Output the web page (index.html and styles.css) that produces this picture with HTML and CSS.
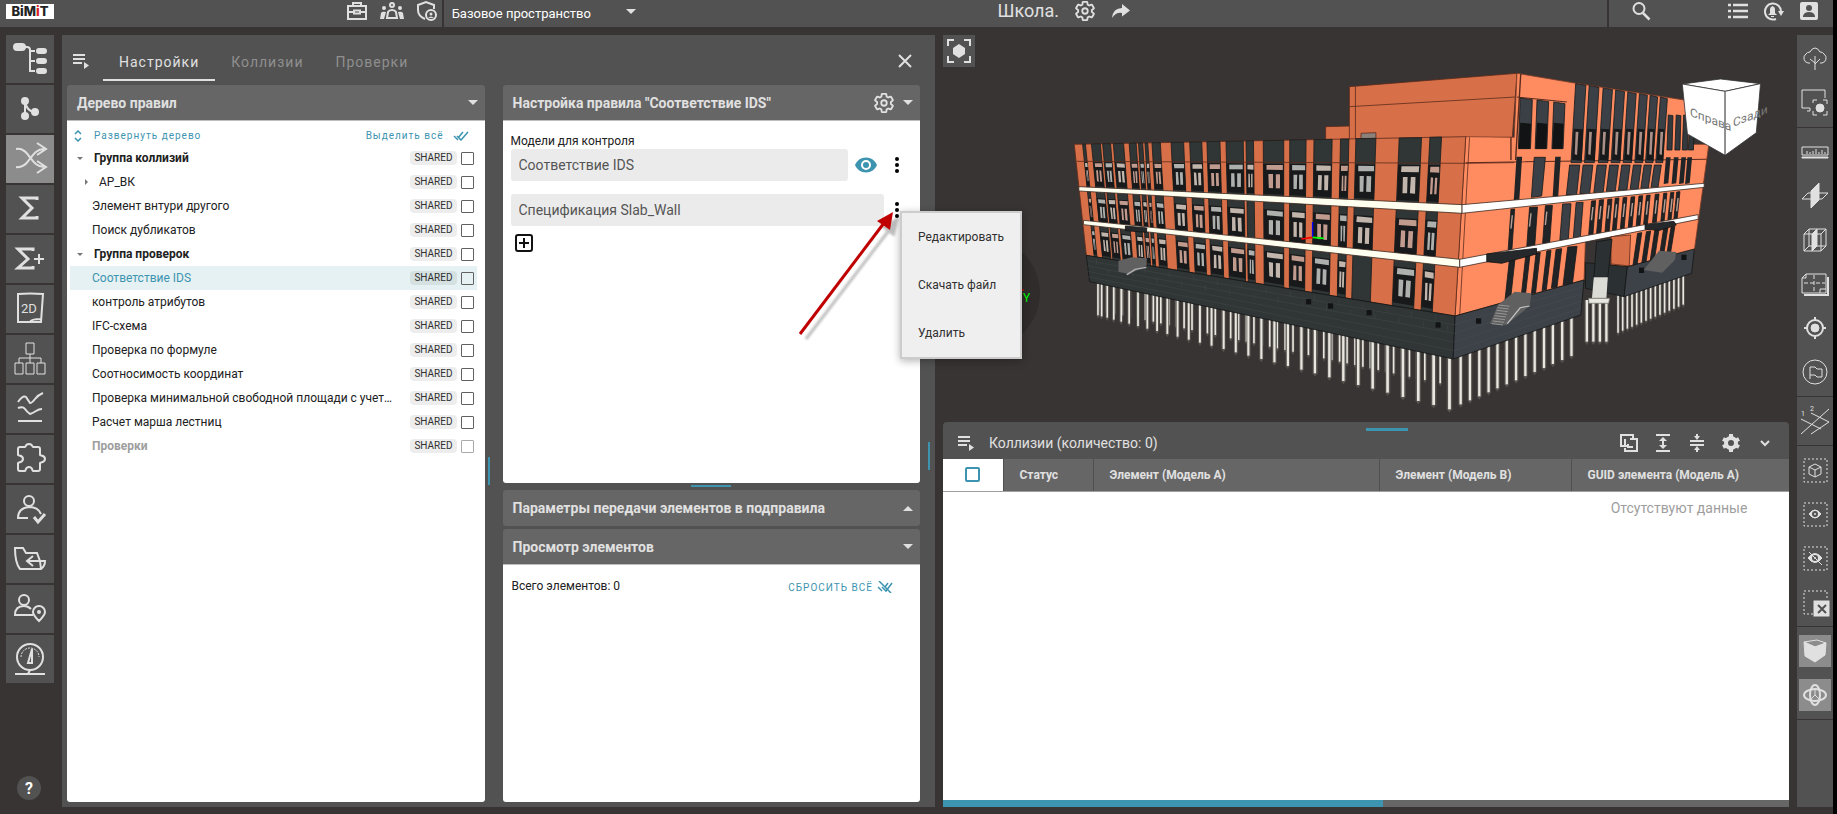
FILE: index.html
```html
<!DOCTYPE html>
<html lang="ru">
<head>
  <meta charset="UTF-8">
  <meta name="viewport" content="width=device-width, initial-scale=1.0">
  <title>BiMiT - Школа</title>
  <link rel="stylesheet" href="styles.css">
</head>
<body>
  <!-- Shared icons -->
  <svg class="sprite" aria-hidden="true">
    <symbol id="i-cog" viewBox="0 0 24 24"><path d="M19.43,12.97C19.47,12.65 19.5,12.33 19.5,12C19.5,11.67 19.47,11.34 19.43,11L21.54,9.37C21.73,9.22 21.78,8.95 21.66,8.73L19.66,5.27C19.54,5.05 19.27,4.96 19.05,5.05L16.56,6.05C16.04,5.66 15.5,5.32 14.87,5.07L14.5,2.42C14.46,2.18 14.25,2 14,2H10C9.75,2 9.54,2.18 9.5,2.42L9.13,5.07C8.5,5.32 7.96,5.66 7.44,6.05L4.95,5.05C4.73,4.96 4.46,5.05 4.34,5.27L2.34,8.73C2.21,8.95 2.27,9.22 2.46,9.37L4.57,11C4.53,11.34 4.5,11.67 4.5,12C4.5,12.33 4.53,12.65 4.57,12.97L2.46,14.63C2.27,14.78 2.21,15.05 2.34,15.27L4.34,18.73C4.46,18.95 4.73,19.03 4.95,18.95L7.44,17.94C7.96,18.34 8.5,18.68 9.13,18.93L9.5,21.58C9.54,21.82 9.75,22 10,22H14C14.25,22 14.46,21.82 14.5,21.58L14.87,18.93C15.5,18.67 16.04,18.34 16.56,17.94L19.05,18.95C19.27,19.03 19.54,18.95 19.66,18.73L21.66,15.27C21.78,15.05 21.73,14.78 21.54,14.63Z" fill="none" stroke="currentColor" stroke-width="2"/><circle cx="12" cy="12" r="3" fill="none" stroke="currentColor" stroke-width="2"/></symbol>
    <symbol id="i-list" viewBox="0 0 18 16"><path d="M1 2h12M1 6h12M1 10h9" stroke="currentColor" stroke-width="2"/><path d="M12 9l5 3.500-5 3.500z" fill="currentColor"/></symbol>
    <symbol id="i-down" viewBox="0 0 10 5"><path d="M0 0h10l-5 5z" fill="currentColor"/></symbol>
    <symbol id="i-up" viewBox="0 0 10 5"><path d="M0 5h10l-5-5z" fill="currentColor"/></symbol>
    <symbol id="i-eye" viewBox="0 0 24 24"><path fill="currentColor" d="M12,9A3,3 0 0,0 9,12A3,3 0 0,0 12,15A3,3 0 0,0 15,12A3,3 0 0,0 12,9M12,17A5,5 0 0,1 7,12A5,5 0 0,1 12,7A5,5 0 0,1 17,12A5,5 0 0,1 12,17M12,4.500C7,4.500 2.730,7.610 1,12C2.730,16.390 7,19.500 12,19.500C17,19.500 21.270,16.390 23,12C21.270,7.610 17,4.500 12,4.500Z"/></symbol>
    <symbol id="i-dots" viewBox="0 0 24 24"><circle cx="12" cy="6" r="2"/><circle cx="12" cy="12" r="2"/><circle cx="12" cy="18" r="2"/></symbol>
  </svg>

  <header class="topbar">
    <div class="top-left">
      <a class="logo" href="#">B<i>i</i>M<i class="red">i</i>T</a>
      <div class="top-icons">
        <button class="icon-btn" aria-label="Проекты"><svg width="22" height="20" viewBox="0 0 22 20"><path d="M2 5h18v13H2zM7 5V2h8v3M2 11h6m6 0h6M8 9.500h6v3H8z" fill="none" stroke="currentColor" stroke-width="2"/></svg></button>
        <button class="icon-btn" aria-label="Команда"><svg width="26" height="20" viewBox="0 0 26 20"><g fill="none" stroke="currentColor" stroke-width="2"><circle cx="13" cy="4" r="2"/><path d="M8 17l1-6q1-2 4-2t4 2l1 6z"/></g><g fill="currentColor"><circle cx="5" cy="7" r="2"/><circle cx="21" cy="7" r="2"/><path d="M1 18l1-6q1-2 5-1l-2 7zM25 18l-1-6q-1-2-5-1l2 7z"/></g></svg></button>
        <button class="icon-btn" aria-label="Права"><svg width="22" height="22" viewBox="0 0 22 22"><path d="M9 19Q2 16 2 10V5l8-3 8 3v4" fill="none" stroke="currentColor" stroke-width="2"/><circle cx="15" cy="15" r="5" fill="none" stroke="currentColor" stroke-width="2"/><circle cx="15" cy="14" r="1.500" fill="currentColor"/><path d="M12 18q3-3 6 0z" fill="currentColor"/></svg></button>
      </div>
    </div>
    <div class="top-space">
      <select class="space-select" aria-label="Пространство"><option>Базовое пространство</option></select>
      <svg class="space-caret" width="10" height="5"><use href="#i-down"/></svg>
    </div>
    <div class="top-title">
      <span class="project">Школа.</span>
      <button class="icon-btn" aria-label="Настройки проекта"><svg width="22" height="22"><use href="#i-cog"/></svg></button>
      <button class="icon-btn" aria-label="Поделиться"><svg width="20" height="18" viewBox="0 0 20 18"><path d="M11 2l8 6.500-8 6V11Q5 10 1 16 2 6 11 6z" fill="currentColor"/></svg></button>
    </div>
    <div class="top-right">
      <button class="icon-btn search-btn" aria-label="Поиск"><svg width="20" height="20" viewBox="0 0 20 20"><circle cx="8" cy="7.500" r="5.500" fill="none" stroke="currentColor" stroke-width="2"/><path d="M12 12l6.500 6.500" stroke="currentColor" stroke-width="2.500"/></svg></button>
      <button class="icon-btn" aria-label="Список"><svg width="20" height="18" viewBox="0 0 20 18"><path d="M5 3h15M5 9h15M5 15h15M0 3h3M0 9h3M0 15h3" stroke="currentColor" stroke-width="2.500"/></svg></button>
      <button class="icon-btn" aria-label="Уведомления"><svg width="22" height="20" viewBox="0 0 22 20"><path d="M13 18a8 8 0 1 1 5-7" fill="none" stroke="currentColor" stroke-width="2"/><path d="M15 10h6l-3 5zM5 14l2-2V8q0-2 2.500-3 2.500 1 2.500 3v4l2 2zM8 15h3v1H8z" fill="currentColor"/></svg></button>
      <button class="icon-btn" aria-label="Профиль"><svg width="18" height="18" viewBox="0 0 18 18"><rect width="18" height="18" rx="2" fill="currentColor"/><circle cx="9" cy="6" r="3" fill="#525252"/><path d="M3 15v-1q1-4 6-4t6 4v1z" fill="#525252"/></svg></button>
    </div>
  </header>

  <main class="workspace">
    <nav class="sidebar">
      <button class="side-btn" aria-label="Структура"><svg viewBox="0 0 48 48"><g fill="currentColor"><rect x="8" y="9" width="11" height="6" rx="3"/><rect x="31" y="14" width="9" height="4" rx="2"/><rect x="31" y="24" width="9" height="4" rx="2"/><rect x="31" y="34" width="9" height="4" rx="2"/></g><path d="M18 12h3q3 0 3 3v21h5M24 16h5M24 26h5"/></svg></button>
      <button class="side-btn" aria-label="Ветви"><svg viewBox="0 0 48 48"><g fill="currentColor"><circle cx="19" cy="16" r="3"/><circle cx="19" cy="31" r="3"/><circle cx="29" cy="27" r="3"/></g><path d="M19 16v15M19 17q2 9 9 10"/></svg></button>
      <button class="side-btn active" aria-label="Коллизии"><svg viewBox="0 0 48 48"><path d="M10 32c14 2 14-18 28-18M10 14c14-2 14 18 28 18M31 8l9 6-9 6M31 26l9 6-9 6"/></svg></button>
      <button class="side-btn" aria-label="Сумма"><svg viewBox="0 0 48 48"><path class="bold" d="M31 15v-2H16l10 10-10 10h15v-2"/></svg></button>
      <button class="side-btn" aria-label="Сумма плюс"><svg viewBox="0 0 48 48"><path class="bold" d="M27 16v-2H12l10 10-10 9h15v-2"/><path d="M33 19v10M28 24h10"/></svg></button>
      <button class="side-btn" aria-label="Чертежи"><svg viewBox="0 0 48 48"><path d="M12 9q12-1 25 0l-2 28H12zM24 37q1-3 11-3"/><text x="15" y="28">2D</text></svg></button>
      <button class="side-btn" aria-label="Иерархия"><svg viewBox="0 0 48 48"><path class="thin" d="M20 8h8v11h-8zM9 28h8v11H9zM20 28h8v11h-8zM31 28h8v11h-8zM24 19v9M13 28v-5h22v5"/></svg></button>
      <button class="side-btn" aria-label="Графики"><svg viewBox="0 0 48 48"><path d="M12 17q5-7 8-5l4 6q2 0 5-4t8-6M12 23q5-2 7 1t5 5q3-1 6-3t6-2M12 36h24"/></svg></button>
      <button class="side-btn" aria-label="Модули"><svg viewBox="0 0 48 48"><path d="M12 14q0-2 2-2h5c1 0 0-3 4-3s3 3 4 3h5q2 0 2 2v6c0 1 5 0 5 4s-5 3-5 4v6q0 2-2 2h-5c-1 0 0-4-4-4s-3 4-4 4h-5q-2 0-2-2v-6c0-1 5 0 5-4s-5-3-5-4z"/></svg></button>
      <button class="side-btn" aria-label="Согласование"><svg viewBox="0 0 48 48"><circle cx="23" cy="16" r="5"/><path d="M22 33H12q0-10 11-11 9 0 12 7"/><path class="bold" d="M28 32l4 5 7-8"/></svg></button>
      <button class="side-btn" aria-label="Импорт"><svg viewBox="0 0 48 48"><path d="M9 13h8l3 5h11l3 8h5q0 5-4 8H14Q9 28 9 13zM34 26l1 8M36 26H22M27 21l-6 5 6 5"/></svg></button>
      <button class="side-btn" aria-label="Расположение"><svg viewBox="0 0 48 48"><circle cx="18" cy="15" r="5"/><path d="M27 30H9q0-9 9-9 4 0 7 3M33 36q-6-6-6-9a6 6 0 0 1 12 0q0 3-6 9z"/><circle cx="33" cy="27" r="1"/></svg></button>
      <button class="side-btn" aria-label="Показатели"><svg viewBox="0 0 48 48"><circle cx="24" cy="22" r="13"/><path class="thin" d="M15 22a9 9 0 0 1 18 0" stroke-dasharray="2 1"/><path d="M26 14l-4 14h4zM9 39h30M24 35l-2 4"/></svg></button>
      <button class="help" aria-label="Помощь">?</button>
    </nav>

    <section class="rules">
      <div class="tabs">
        <button class="icon-btn" aria-label="Меню"><svg width="18" height="16"><use href="#i-list"/></svg></button>
        <div class="tab-list" role="tablist">
          <button class="tab active" role="tab">Настройки</button>
          <button class="tab" role="tab">Коллизии</button>
          <button class="tab" role="tab">Проверки</button>
        </div>
        <button class="icon-btn" aria-label="Закрыть"><svg width="14" height="14" viewBox="0 0 14 14"><path d="M1 1l12 12M13 1L1 13" stroke="currentColor" stroke-width="2"/></svg></button>
      </div>

      <div class="columns">
        <section class="card">
          <h2 class="card-head">Дерево правил <svg width="10" height="5"><use href="#i-down"/></svg></h2>
          <div class="card-body tree">
            <div class="tree-actions">
              <button class="link-btn"><svg width="8" height="12" viewBox="0 0 8 12"><path d="M1 4l3-3 3 3M1 8l3 3 3-3" fill="none" stroke="currentColor" stroke-width="1.500"/></svg>Развернуть дерево</button>
              <button class="link-btn">Выделить всё<svg width="16" height="10" viewBox="0 0 16 10"><path d="M1 5l4 4M4 5l4 4 7-8M10 1L5 7" fill="none" stroke="currentColor" stroke-width="1.500"/></svg></button>
            </div>
            <ul class="tree-list" id="tree"></ul>
          </div>
        </section>

        <div class="splitter"></div>

        <div class="stack">
          <section class="card card-rule">
            <h2 class="card-head">Настройка правила "Соответствие IDS"
              <span class="head-tools"><button class="icon-btn" aria-label="Настроить"><svg width="22" height="22"><use href="#i-cog"/></svg></button><svg width="10" height="5"><use href="#i-down"/></svg></span>
            </h2>
            <div class="card-body form">
              <label for="model">Модели для контроля</label>
              <div class="field">
                <input id="model" type="text" value="Соответствие IDS">
                <button class="eye-btn" aria-label="Показать"><svg width="24" height="24"><use href="#i-eye"/></svg></button>
                <button class="dots-btn" aria-label="Ещё"><svg width="24" height="24"><use href="#i-dots"/></svg></button>
              </div>
              <div class="field">
                <input type="text" value="Спецификация Slab_Wall" aria-label="Спецификация">
                <div class="menu-anchor">
                  <button class="dots-btn" aria-label="Ещё"><svg width="24" height="24"><use href="#i-dots"/></svg></button>
                  <div class="menu">
                    <button>Редактировать</button>
                    <button>Скачать файл</button>
                    <button>Удалить</button>
                  </div>
                  <svg class="pointer" width="106" height="136" viewBox="0 0 106 136">
                    <g class="pointer-shade"><path d="M10 131L94 21" stroke-width="3"/><path d="M102 10l-4 18-12-9z"/></g>
                    <path d="M4 126L88 15" stroke="#c00000" stroke-width="3"/><path d="M97 4l-3 18-13-9z" fill="#c00000"/>
                  </svg>
                </div>
              </div>
              <button class="add-btn" aria-label="Добавить"><svg width="18" height="18" viewBox="0 0 18 18"><rect x="1" y="1" width="16" height="16" rx="2"/><path d="M9 4v10M4 9h10"/></svg></button>
            </div>
          </section>
          <div class="splitter-row"></div>
          <section class="card card-closed">
            <h2 class="card-head">Параметры передачи элементов в подправила <svg width="10" height="5"><use href="#i-up"/></svg></h2>
          </section>
          <section class="card card-view">
            <h2 class="card-head">Просмотр элементов <svg width="10" height="5"><use href="#i-down"/></svg></h2>
            <div class="card-body totals">
              <span>Всего элементов: 0</span>
              <button class="link-btn">СБРОСИТЬ ВСЁ<svg width="16" height="12" viewBox="0 0 16 12"><path d="M1 6l4 4M5 6l4 4 6-8M11 2L8 6M2 0l12 12" fill="none" stroke="currentColor" stroke-width="1.500"/></svg></button>
            </div>
          </section>
        </div>

        <div class="splitter splitter-end"></div>
      </div>
    </section>

    <section class="viewer">
      <div class="scene">
        <svg id="model-view" viewBox="0 0 846 379" role="img" aria-label="Модель здания"></svg>
        <button class="fit-btn" aria-label="Показать всё"><svg width="24" height="24" viewBox="0 0 24 24"><path d="M1 7V1h6M17 1h6v6M23 17v6h-6M7 23H1v-6" fill="none" stroke="currentColor" stroke-width="2"/><path d="M12 5l6 4v6l-6 4-6-4V9z" fill="currentColor"/></svg></button>
      </div>
      <section class="results">
        <div class="grip"></div>
        <div class="results-head">
          <button class="icon-btn" aria-label="Меню"><svg width="18" height="16"><use href="#i-list"/></svg></button>
          <h2>Коллизии (количество: 0)</h2>
          <button class="icon-btn" aria-label="Копировать"><svg width="20" height="20" viewBox="0 0 20 20"><path d="M6 13H2V2h12v4M6 6v7h3M14 14H9v-3M11 6h7v12H6v-3" fill="none" stroke="currentColor" stroke-width="2"/></svg></button>
          <button class="icon-btn" aria-label="Развернуть строки"><svg width="20" height="20" viewBox="0 0 20 20"><path d="M3 2h14M3 18h14M10 5v10" stroke="currentColor" stroke-width="2"/><path d="M6 8l4-4 4 4zM6 12l4 4 4-4z" fill="currentColor"/></svg></button>
          <button class="icon-btn" aria-label="Свернуть строки"><svg width="20" height="20" viewBox="0 0 20 20"><path d="M3 8h14M3 12h14M10 1v3M10 16v3" stroke="currentColor" stroke-width="2"/><path d="M7 3h6l-3 4zM7 17h6l-3-4z" fill="currentColor"/></svg></button>
          <button class="icon-btn" aria-label="Настройки таблицы"><svg width="20" height="20" viewBox="0 0 20 20"><circle cx="10" cy="10" r="5" fill="none" stroke="currentColor" stroke-width="4"/><path d="M10 1v4M10 15v4M2 6l4 2M14 12l4 2M18 6l-4 2M6 12l-4 2" stroke="currentColor" stroke-width="4"/></svg></button>
          <button class="icon-btn" aria-label="Свернуть"><svg width="20" height="20" viewBox="0 0 20 20"><path d="M6 8l4 4 4-4" fill="none" stroke="currentColor" stroke-width="2"/></svg></button>
        </div>
        <div class="table-wrap">
          <table>
            <thead>
              <tr>
                <th class="col-check"><input type="checkbox" aria-label="Выбрать все"></th>
                <th class="col-status">Статус</th>
                <th class="col-a">Элемент (Модель А)</th>
                <th class="col-b">Элемент (Модель В)</th>
                <th>GUID элемента (Модель А)</th>
              </tr>
            </thead>
            <tbody><tr><td colspan="5">Отсутствуют данные</td></tr></tbody>
          </table>
        </div>
        <div class="scrollbar"><div class="thumb"></div></div>
      </section>
    </section>

    <aside class="toolbar">
      <div class="tools">
        <button aria-label="Дерево"><svg viewBox="0 0 28 28"><path d="M9 18H7a5 5 0 0 1-2-9q1-2 4-2 2-4 5-4t5 4q3 0 4 2a5 5 0 0 1-2 9h-2M14 25V11M14 19l5-5M14 18l-5-4"/></svg></button>
        <button aria-label="Фокус на элементе"><svg viewBox="0 0 28 28"><path d="M24 9V1H1v18h8v3H6M12 14v-3h4M22 11h4v4M26 22v4h-4M16 26h-4v-4"/><circle class="fill" cx="19" cy="19" r="4"/></svg></button>
      </div>
      <div class="tools">
        <button aria-label="Линейка"><svg viewBox="0 0 28 28"><path d="M1 9h26v8H1zM6 16v-3M9 16v-2M12 16v-3M15 16v-5M18 16v-2M21 16v-4M24 16v-2"/><path class="fill" d="M1 19h26v1H1z"/></svg></button>
        <button aria-label="Плоскость"><svg viewBox="0 0 28 28"><path d="M7 11h20l-6 6H1z"/><path class="fill" d="M10 9l8-8v17l-8 8z"/></svg></button>
        <button aria-label="Сечение"><svg viewBox="0 0 28 28"><path d="M3 8h17v17H3zM8 3h17v17H8zM3 8l5-5M20 8l5-5M3 25l5-5M20 25l5-5"/><path class="fill" d="M11 8l5-5v17l-5 5z"/></svg></button>
        <button aria-label="План"><svg viewBox="0 0 28 28"><path d="M5 4h20v19H1V8zM1 8h4V4M19 23v-4h6"/><path d="M13 5v17M3 13h21" stroke-dasharray="4 2"/><path d="M27 7v18H3" stroke-width="2"/></svg></button>
        <button aria-label="Цель"><svg viewBox="0 0 28 28"><circle cx="14" cy="14" r="8" stroke-width="2"/><circle class="fill" cx="14" cy="14" r="4"/><path d="M14 3v4M14 21v4M3 14h4M21 14h4" stroke-width="2"/></svg></button>
        <button aria-label="Метка"><svg viewBox="0 0 28 28"><circle cx="14" cy="14" r="12"/><path d="M9 21V9h5l2 2h5v8h-5l-2-2H9"/></svg></button>
      </div>
      <div class="tools">
        <button aria-label="Оси"><svg viewBox="0 0 28 28"><path d="M0 27L28 2M0 12l20 10M10 6l18 9M10 27l18-12"/><text x="0" y="9">1</text><text x="9" y="4">2</text></svg></button>
      </div>
      <div class="tools">
        <button aria-label="Выделить"><svg viewBox="0 0 28 28"><rect x="3" y="3" width="23" height="23" stroke-dasharray="2 2"/><path d="M14 8l6 3v7l-6 3-6-3v-7zM8 11l6 3 6-3M14 14v7"/></svg></button>
        <button aria-label="Показать"><svg viewBox="0 0 28 28"><rect x="3" y="3" width="23" height="23" stroke-dasharray="2 2"/><path class="fill" d="M8 14q6-8 12 0-6 8-12 0z"/><circle class="hole" cx="14" cy="14" r="2"/></svg></button>
        <button aria-label="Скрыть"><svg viewBox="0 0 28 28"><rect x="3" y="3" width="23" height="23" stroke-dasharray="2 2"/><path class="fill" d="M7 14q7-9 14 0-7 9-14 0z"/><circle class="hole" cx="14" cy="14" r="2"/><path d="M8 8l13 13"/></svg></button>
        <button aria-label="Снять выделение"><svg viewBox="0 0 28 28"><path d="M12 26H3V3h23v9" stroke-dasharray="2 2"/><rect class="fill" x="13" y="13" width="15" height="15"/><path class="hole" d="M17 17l8 8M25 17l-8 8"/></svg></button>
      </div>
      <div class="tools">
        <button class="on" aria-label="Объём"><svg viewBox="0 0 28 28"><path d="M3 5l13-2 9 3-11 4z"/><path class="fill" d="M3 5l11 5v15L4 19zM14 10l11-4-1 12-10 7z"/></svg></button>
        <button class="on" aria-label="Вращение"><svg viewBox="0 0 28 28"><ellipse cx="14" cy="14" rx="11" ry="6" stroke-width="2"/><ellipse cx="14" cy="14" rx="5" ry="10" stroke-width="2"/><path d="M14 9v5l-4 4M14 14l4 4"/></svg></button>
      </div>
    </aside>
  </main>
  <script src="script.js"></script>
</body>
</html>
```
FILE: styles.css
```css
* {
  box-sizing: border-box;
}

body {
  margin: 0;
  height: 100vh;
  display: flex;
  flex-direction: column;
  background: #383433;
  border-right: 4px solid #000;
  color: #212121;
  font-family: Roboto, "Open Sans", sans-serif;
  font-size: 12px;
  overflow: hidden;
}

button,
input,
select {
  font-family: inherit;
  font-size: inherit;
}

button {
  padding: 0;
  border: none;
  background: none;
  color: inherit;
  cursor: pointer;
}

h2 {
  margin: 0;
}

.sprite {
  display: none;
}

.icon-btn {
  display: flex;
  align-items: center;
  justify-content: center;
  color: #e0e0e0;
}

/* Top bar */
.topbar {
  display: flex;
  flex: 0 0 27px;
  background: #525252;
  color: #e0e0e0;
}

.top-left {
  flex: 446 1 0;
  display: flex;
  justify-content: space-between;
  align-items: center;
  padding: 0 4px 5px 6px;
}

.logo {
  width: 48px;
  height: 15px;
  background: #fff;
  color: #222;
  font-family: Inter, sans-serif;
  font-size: 13px;
  font-weight: 800;
  line-height: 15px;
  text-align: center;
  text-decoration: none;
}

.logo i {
  font-style: normal;
}

.logo .red {
  color: #d22;
}

.top-icons {
  display: flex;
  align-items: center;
  gap: 11px;
}

.top-space {
  flex: 564 1 0;
  display: flex;
  align-items: center;
  padding-left: 8px;
  border-left: 2px solid #383433;
}

.space-select {
  width: 174px;
  padding: 0;
  border: none;
  appearance: none;
  background: none;
  color: #fff;
  font-size: 13px;
}

.space-caret {
  margin-bottom: 5px;
}

.top-title {
  flex: 630 1 0;
  display: flex;
  align-items: center;
  gap: 15px;
  padding-bottom: 5px;
}

.project {
  font-size: 18px;
  line-height: 22px;
}

.top-right {
  flex: 193 1 0;
  display: flex;
  align-items: center;
  gap: 15px;
  padding: 0 15px 5px 22px;
  border-left: 2px solid #383433;
}

.search-btn {
  margin-right: auto;
}

/* Page grid */
.workspace {
  flex: 1;
  min-height: 0;
  display: grid;
  grid-template-columns: 48px minmax(0, 873fr) minmax(0, 846fr) 36px;
  gap: 8px;
  padding: 8px 0 7px 6px;
}

/* Left sidebar */
.sidebar {
  display: flex;
  flex-direction: column;
  gap: 2px;
}

.side-btn {
  height: 48px;
  background: #525252;
  color: #e0e0e0;
}

.side-btn.active {
  background: #8c8c8c;
}

.side-btn svg {
  display: block;
  width: 48px;
  height: 48px;
  fill: none;
  stroke: currentColor;
  stroke-width: 2;
}

.side-btn .bold {
  stroke-width: 3;
}

.side-btn .thin {
  stroke-width: 1;
}

.side-btn text {
  fill: currentColor;
  stroke: none;
  font-size: 13px;
}

.help {
  width: 24px;
  height: 24px;
  margin: auto 0 7px 11px;
  border-radius: 50%;
  background: #525252;
  color: #fff;
  font-size: 16px;
  font-weight: 700;
}

/* Rules panel */
.rules {
  display: flex;
  flex-direction: column;
  background: #525252;
}

.tabs {
  flex: 0 0 50px;
  display: flex;
  padding: 6px 23px 4px 10px;
}

.tab-list {
  flex: 1;
  display: flex;
  padding-left: 13px;
}

.tab {
  padding: 4px 16px 0;
  border-bottom: 2px solid transparent;
  color: #8f8f8f;
  font-size: 14px;
  letter-spacing: 1px;
}

.tab.active {
  border-color: #e0e0e0;
  color: #e0e0e0;
}

.columns {
  flex: 1;
  min-height: 0;
  display: grid;
  grid-template-columns: minmax(0, 1fr) 18px minmax(0, 1fr) 15px;
  padding: 0 0 5px 5px;
}

.splitter {
  align-self: center;
  width: 2px;
  height: 28px;
  margin: 54px 0 0 3px;
  background: #3d94b0;
}

.splitter-end {
  margin: 24px 0 0 8px;
}

.stack {
  display: flex;
  flex-direction: column;
}

.splitter-row {
  align-self: center;
  width: 40px;
  height: 2px;
  margin: 2px 0 3px;
  background: #3d94b0;
}

.card {
  display: flex;
  flex-direction: column;
}

.card-rule {
  flex: 399 1 0;
}

.card-closed {
  margin-bottom: 3px;
}

.card-closed .card-head {
  border-bottom: none;
  border-radius: 3px;
}

.card-view {
  flex: 273 1 0;
}

.card-head {
  flex: 0 0 36px;
  display: flex;
  align-items: center;
  justify-content: space-between;
  padding: 0 7px 0 10px;
  background: #666;
  border-bottom: 1px solid #bdbdbd;
  border-radius: 3px 3px 0 0;
  color: #e0e0e0;
  font-size: 14px;
  font-weight: 700;
}

.head-tools {
  display: flex;
  align-items: center;
  gap: 8px;
}

.card-body {
  flex: 1;
  background: #fff;
  border-radius: 0 0 3px 3px;
}

.link-btn {
  display: flex;
  align-items: center;
  color: #3d94b0;
  font-size: 10px;
  letter-spacing: 1px;
}

/* Rule tree */
.tree {
  padding: 4px 8px 0 3px;
}

.tree-actions {
  display: flex;
  justify-content: space-between;
  height: 21px;
  padding: 0 8px 0 4px;
}

.tree-actions .link-btn {
  gap: 12px;
}

.tree-actions .link-btn:last-child {
  gap: 9px;
}

.tree-list {
  margin: 0;
  padding: 0;
  list-style: none;
}

.tree-row {
  display: flex;
  align-items: center;
  gap: 4px;
  height: 24px;
  padding: 0 3px 0 22px;
}

.tree-row.group {
  padding-left: 7px;
  font-weight: 700;
}

.tree-row.child {
  padding-left: 15px;
}

.tree-row.selected {
  background: #e6f1f3;
  color: #3d94b0;
}

.tree-row.disabled {
  color: #9e9e9e;
  font-weight: 700;
}

.tree-row label {
  flex: 1;
  min-width: 0;
  margin-right: 8px;
  overflow: hidden;
  text-overflow: ellipsis;
  white-space: nowrap;
}

.toggle {
  width: 6px;
  height: 3px;
  margin-right: 7px;
  border: 3px solid transparent;
  border-top-color: #757575;
  border-bottom: none;
}

.child .toggle {
  width: 3px;
  height: 6px;
  border: 3px solid transparent;
  border-left-color: #757575;
  border-right: none;
}

.badge {
  padding: 0 4px;
  border-radius: 4px;
  background: rgba(0, 0, 0, 0.07);
  color: #303030;
  font-size: 10px;
  font-weight: 400;
  line-height: 14px;
}

input[type="checkbox"] {
  appearance: none;
  width: 13px;
  height: 13px;
  margin: 0;
  border: 1px solid #616161;
  border-radius: 1px;
}

.disabled input[type="checkbox"] {
  border-color: #aaa;
}

/* Rule form */
.form {
  padding: 12px 11px 0 8px;
}

.form label {
  display: block;
  line-height: 16px;
}

.field {
  display: flex;
  align-items: center;
  height: 32px;
  margin-bottom: 13px;
}

.field input {
  flex: 1;
  min-width: 0;
  height: 32px;
  padding: 0 8px;
  border: none;
  border-radius: 3px;
  background: #ebebeb;
  color: #555;
  font-size: 14px;
}

.eye-btn {
  width: 36px;
  height: 24px;
  color: #3d94b0;
}

.dots-btn {
  display: block;
  width: 24px;
  height: 24px;
  margin-left: 1px;
}

.menu-anchor {
  position: relative;
}

.menu {
  position: absolute;
  z-index: 2;
  top: 13px;
  left: 16px;
  width: 122px;
  border: 2px solid #ccc;
  background: #efefef;
  box-shadow: 0 2px 8px rgba(0, 0, 0, 0.3);
}

.menu button {
  display: block;
  width: 100%;
  height: 48px;
  padding-left: 16px;
  color: #303030;
  text-align: left;
}

.pointer {
  position: absolute;
  z-index: 3;
  top: 10px;
  left: -88px;
  pointer-events: none;
}

.pointer-shade {
  fill: #000;
  stroke: #000;
  opacity: 0.25;
  filter: blur(1px);
}

.add-btn {
  display: block;
  height: 18px;
  margin: -5px 0 0 4px;
}

.add-btn svg {
  display: block;
  fill: none;
  stroke: #111;
  stroke-width: 2;
}

.totals {
  display: flex;
  align-items: flex-start;
  justify-content: space-between;
  padding: 13px 27px 0 9px;
  line-height: 16px;
}

.totals .link-btn {
  gap: 4px;
  height: 18px;
}

/* Model viewer */
.viewer {
  display: flex;
  flex-direction: column;
  gap: 8px;
  min-height: 0;
}

.scene {
  position: relative;
  flex: 379 1 0;
  min-height: 0;
}

.scene > svg {
  display: block;
  width: 100%;
  height: 100%;
}

.scene text {
  font-size: 12px;
}

.fit-btn {
  position: absolute;
  top: 0;
  left: 0;
  display: grid;
  place-items: center;
  width: 32px;
  height: 32px;
  background: #525252;
  color: #e0e0e0;
}

.results {
  flex: 385 1 0;
  display: flex;
  flex-direction: column;
  overflow: hidden;
  border-radius: 4px 4px 0 0;
  background: #525252;
}

.grip {
  align-self: center;
  width: 42px;
  height: 3px;
  margin-top: 6px;
  margin-left: 42px;
  background: #3d94b0;
}

.results-head {
  flex: 0 0 28px;
  display: flex;
  align-items: center;
  gap: 14px;
  padding: 0 14px 4px;
  color: #e0e0e0;
}

.results-head h2 {
  flex: 1;
  font-size: 14px;
  font-weight: 400;
}

.table-wrap {
  flex: 1;
  overflow: hidden;
  background: #fff;
}

table {
  width: 174%;
  border-collapse: collapse;
  table-layout: fixed;
}

th {
  height: 32px;
  padding: 0 0 0 16px;
  border-left: 1px solid #4f4f4f;
  border-bottom: 1px solid #9e9e9e;
  background: #666;
  color: #e0e0e0;
  font-size: 12px;
  text-align: left;
}

.col-check {
  width: 60px;
  padding: 0;
  border-left: none;
  background: #fff;
  text-align: center;
}

.col-check input {
  width: 15px;
  height: 15px;
  border: 2px solid #3d94b0;
  border-radius: 2px;
  vertical-align: middle;
}

.col-status {
  width: 90px;
}

.col-a {
  width: 286px;
}

.col-b {
  width: 192px;
}

td {
  padding: 8px 0;
  color: #9e9e9e;
  font-size: 14px;
  text-align: center;
}

.scrollbar {
  flex: 0 0 7px;
  background: #666;
}

.thumb {
  width: 52%;
  height: 7px;
  background: #3d94b0;
}

/* Right toolbar */
.toolbar {
  background: #525252;
}

.tools {
  display: flex;
  flex-direction: column;
  align-items: center;
  gap: 12px;
  padding: 8px 0;
  border-bottom: 1px solid #383433;
}

.tools button {
  display: grid;
  place-items: center;
  width: 32px;
  height: 32px;
  color: #e0e0e0;
}

.tools .on {
  background: #8c8c8c;
}

.tools svg {
  width: 28px;
  height: 28px;
  fill: none;
  stroke: currentColor;
  overflow: visible;
}

.tools .fill {
  fill: currentColor;
}

.tools .hole {
  fill: none;
  stroke: #525252;
  stroke-width: 2;
}

.tools text {
  fill: currentColor;
  stroke: none;
  font-size: 7px;
}
```
FILE: script.js
```js
// Rule tree
const rules = [
  ["Группа коллизий", "group"],
  ["АР_ВК", "child"],
  ["Элемент внтури другого", ""],
  ["Поиск дубликатов", ""],
  ["Группа проверок", "group"],
  ["Соответствие IDS", "selected"],
  ["контроль атрибутов", ""],
  ["IFC-схема", ""],
  ["Проверка по формуле", ""],
  ["Соотносимость координат", ""],
  ["Проверка минимальной свободной площади с учетом мебели", ""],
  ["Расчет марша лестниц", ""],
  ["Проверки", "disabled"]
];

document.getElementById("tree").innerHTML = rules.map(([name, type], i) => {
  const toggle = type === "group" || type === "child"
    ? '<button class="toggle" aria-label="Раскрыть"></button>' : "";
  return `<li class="tree-row ${type}">${toggle}<label for="rule-${i}">${name}</label>
    <span class="badge">SHARED</span><input type="checkbox" id="rule-${i}" ${type === "disabled" ? "disabled" : ""}></li>`;
}).join("");

// Building model
const shapes = [];

function poly(points, fill, stroke) {
  const line = stroke ? ` stroke="${stroke}" stroke-width="2"` : "";
  shapes.push(`<polygon points="${points.map(p => p.map(Math.round).join()).join(" ")}" fill="${fill}"${line}/>`);
}

function path(d, color, width) {
  shapes.push(`<path d="${d}" fill="none" stroke="${color}" stroke-width="${width}"/>`);
}

// Point on a wall: x is measured along the top edge, v goes from top (0) to bottom (1)
function wall(tl, tr, bl, br) {
  return (x, v) => {
    const u = (x - tl[0]) / (tr[0] - tl[0]);
    const top = tl[1] + (tr[1] - tl[1]) * u;
    const bottom = bl[1] + (br[1] - bl[1]) * u;
    const bx = bl[0] + (br[0] - bl[0]) * u;
    return [x + (bx - x) * v, top + (bottom - top) * v];
  };
}

function cell(at, x1, x2, v1, v2, fill, stroke) {
  poly([at(x1, v1), at(x2, v1), at(x2, v2), at(x1, v2)], fill, stroke);
}

function pane(at, x1, x2, v1, v2, tint) {
  const w = x2 - x1;
  const h = v2 - v1;
  cell(at, x1, x2, v1, v2, "#17191a");
  cell(at, x1 + w * 0.15, x2 - w * 0.05, v1 + h * 0.04, v1 + h * 0.2, tint);
  cell(at, x1 + w * 0.25, x1 + w * 0.46, v1 + h * 0.34, v1 + h * 0.8, tint);
  cell(at, x1 + w * 0.6, x1 + w * 0.82, v1 + h * 0.34, v1 + h * 0.8, tint);
}

function pile(x, top, tip, width) {
  const w = width / 2;
  poly([[x - w, top], [x + w, top], [x + w, tip - 10], [x, tip], [x - w, tip - 10]], "#55534f");
  path(`M${Math.round(x)} ${Math.round(top)}V${Math.round(tip - 10)}`, "#e8e6de", w);
}

// Piles under both wings, back row first
for (let i = 0; i < 46; i++) {
  const t = i / 45;
  const x = 105 + 750 * t;
  pile(x, 690 + 230 * t, 790 + 225 * t, 7);
}
for (let i = 0; i < 31; i++) {
  const t = Math.pow(i / 30, 1.35);
  pile(103 + 755 * t, 690 + 235 * t, 806 + 282 * t, 7 + 5 * t);
}
for (let i = 0; i < 13; i++) {
  const t = i / 12;
  pile(882 + 238 * t, 900 - 100 * t, 1073 - 145 * t, 10);
}
for (let i = 0; i < 4; i++) {
  pile(1153 + i * 14, 750, 885, 10);
}
for (let i = 0; i < 15; i++) {
  pile(1220 + i * 10, 730 - i * 4, 858 - i * 6, 7);
}

// Tall block
poly([[592, 230], [645, 228], [645, 275], [592, 275]], "#d76f48", "#5a2b1c");
poly([[643, 110], [1003, 70], [993, 262], [643, 270]], "#d76f48", "#5a2b1c");
path("M643 170L1000 141M656 109V268", "#5a2b1c", 2);
poly([[668, 250], [700, 248], [700, 266], [668, 266]], "#8b817a", "#5a2b1c");

// Right wing
poly([[893, 260], [997, 262], [1003, 70], [1130, 100], [1362, 150], [1380, 283], [1415, 283], [1384, 600],
  [1240, 650], [1205, 645], [1205, 560], [1150, 570], [1147, 690], [870, 798]], "#ff8c61", "#7c3b26");
path("M1003 141L1110 156M893 338L1410 328M990 330V262M1011 72L1000 330", "#5a2b1c", 3);
[[1010, 1036], [1046, 1071], [1082, 1106]].forEach(([a, b], i) => {
  poly([[a, 144 + i * 6], [b, 149 + i * 6], [b - 4, 296], [a - 4, 296]], "#3a4046", "#17191a");
  poly([[a, 218], [b - 3, 221], [b - 5, 296], [a - 3, 296]], "#111314");
});
const slots = [1129, 1158, 1188, 1215, 1241, 1266, 1289, 1311];
slots.forEach((x, i) => {
  const w = 22 - i;
  const top = 101 + (x - 1129) * 0.22;
  poly([[x, top], [x + w, top + 5], [x + w - 10, 338], [x - 10, 338]], "#3a4046", "#17191a");
  poly([[x - 4, 236], [x + w - 6, 238], [x + w - 9, 332], [x - 8, 330]], "#17191a");
  poly([[x, 245], [x + 6, 246], [x + 3, 315], [x - 2, 313]], "#a88f88");
  // middle floor
  const band = 465 - (x - 893) * 0.127;
  poly([[x - 13, 345], [x + w - 13, 345], [x + w - 20, band], [x - 20, band]], "#3a4046", "#17191a");
});
// Narrow windows near the far end
[1328, 1345, 1361, 1374].forEach(x => {
  poly([[x, 195], [x + 10, 197], [x + 8, 300], [x - 3, 300]], "#33383d", "#17191a");
  poly([[x - 5, 322], [x + 5, 322], [x, 400], [x - 10, 402]], "#202427");
});
// Lower floors of the right wing
const lower = [[990, 8], [1030, 17], [1064, 15], [1101, 18], [1130, 15], [1163, 9], [1180, 9],
  [1198, 9], [1214, 8], [1231, 8], [1248, 8], [1265, 8], [1281, 8], [1300, 8], [1318, 7], [1333, 7], [1346, 7]];
lower.forEach(([x, w], i) => {
  const a = 492 - (x - 893) * 0.145;
  const b = 626 - (x - 893) * 0.265;
  poly([[x, a], [x + w, a - 1], [x + w - 6, b], [x - 6, b]], i === 3 || i === 4 ? "#3a4046" : "#202427", "#17191a");
  if (i !== 3 && i !== 4) {
    path(`M${x + 3} ${Math.round(a + 18)}l-3 40`, "#b5a097", 3);
  }
});
[[987, 12], [1022, 9], [1044, 9], [1067, 9], [1087, 12], [1112, 20], [1262, 9], [1281, 9], [1299, 9], [1318, 9], [1334, 8]].forEach(([x, w]) => {
  const a = 650 - (x - 893) * 0.27;
  const b = 798 - (x - 870) * 0.385;
  poly([[x, a], [x + w, a - 2], [x + w - 10, b - 3], [x - 10, b]], "#202427", "#17191a");
});
[[1002, 12], [1085, 12]].forEach(([x, w]) => {
  poly([[x, 320], [x + w, 320], [x + w - 6, 450], [x - 6, 452]], "#202427");
});
poly([[1040, 322], [1064, 322], [1056, 438], [1034, 442]], "#3a4046", "#17191a");

// Left wing
const left = wall([52, 283], [893, 260], [78, 616], [870, 798]);
cell(left, 52, 893, 0, 1, "#d76f48", "#5a2b1c");
const bays = [[70, 76], [89, 108], [113, 130], [136, 158], [170, 185], [190, 199], [204, 210], [219, 237],
  [260, 287], [300, 326], [337, 365], [378, 415], [421, 437], [458, 502], [515, 550], [567, 606],
  [624, 642], [657, 700], [750, 798], [816, 841]];
const tints = ["#c2b6ac", "#c29b8f", "#aeb0ae"];
bays.forEach(([a, b], i) => {
  cell(left, a, b, 0, 1, "#303636", "#1a1d1d");
  [[0.16, 0.37], [0.475, 0.69], [0.765, 0.98]].forEach(([v1, v2], floor) => {
    if ((i === 17 && floor === 2) || (i === 12 && floor === 1)) {
      return;
    }
    pane(left, a, b, v1, v2, tints[(i + floor) % 3]);
  });
});
path("M58 334L890 340L997 338M901 262L880 795", "#5a2b1c", 2);

// White belts
poly([[62, 410], [885, 464], [885, 490], [62, 423]], "#fffff0", "#3b2a22");
poly([[885, 464], [1405, 400], [1405, 412], [885, 490]], "#fff", "#3b2a22");
poly([[72, 511], [880, 628], [880, 652], [72, 524]], "#fffff0", "#3b2a22");
poly([[880, 628], [1392, 494], [1392, 508], [880, 652]], "#fff", "#3b2a22");

// Canopies
poly([[162, 528], [208, 534], [207, 547], [162, 542]], "#26292b", "#111");
poly([[938, 612], [1045, 595], [1045, 612], [970, 640], [938, 635]], "#26292b", "#111");
poly([[1278, 524], [1340, 514], [1345, 525], [1310, 541], [1278, 538]], "#26292b", "#111");

// Plinth
poly([[78, 616], [870, 798], [866, 927], [85, 695]], "#303536", "#141616");
poly([[870, 798], [1147, 690], [1140, 795], [866, 927]], "#3d4148", "#141616");
poly([[1150, 638], [1240, 650], [1233, 740], [1150, 715]], "#2b3032", "#141616");
poly([[1205, 560], [1247, 555], [1244, 648], [1205, 642]], "#d76f48", "#5a2b1c");
poly([[1240, 650], [1384, 597], [1378, 670], [1233, 740]], "#3d4148", "#141616");
for (let i = 1; i < 5; i++) {
  path(`M80 ${616 + i * 16}L868 ${798 + i * 26}`, "#464b4c", 1);
  path(`M868 ${798 + i * 26}L1142 ${690 + i * 21}`, "#4c5158", 1);
}
for (let x = 100; x < 860; x += 26) {
  const y = Math.round(622 + (x - 78) * 0.23 + (x % 4) * 12);
  path(`M${x} ${y}v18`, "#464b4c", 1);
}
[[555, 755], [602, 768], [685, 788], [833, 825], [920, 813], [1270, 661], [1361, 622]].forEach(([x, y]) => {
  poly([[x - 5, y - 8], [x + 6, y - 8], [x + 6, y + 8], [x - 5, y + 8]], "#111314");
});

// Stairs and passage column
poly([[147, 632], [175, 622], [208, 625], [207, 648], [170, 672], [147, 665]], "#606060");
path("M165 674l18-16 24-6", "#b0b0b0", 4);
poly([[998, 725], [1034, 730], [1030, 768], [980, 825], [945, 822], [962, 765]], "#606060");
for (let i = 0; i < 8; i++) {
  path(`M${963 - i * 2} ${765 + i * 8}l24 4`, "#a5a5a5", 2);
}
path("M1030 768l-20 5-28 48", "#c4c4c4", 3);
poly([[1308, 602], [1345, 606], [1342, 630], [1315, 668], [1275, 660]], "#606060");
poly([[1174, 575], [1207, 568], [1198, 682], [1168, 682]], "#2b3032", "#141616");
poly([[1168, 682], [1198, 682], [1195, 745], [1164, 745]], "#dcdcd6");
poly([[1157, 745], [1202, 745], [1200, 760], [1157, 760]], "#e8e8e2", "#77776f");

// Model axes
path("M564 562V516", "#00f", 3);
path("M564 562l-24 5", "#f00", 5);
path("M564 562l24 3", "#0f0", 5);

// Navigation cube
poly([[1358, 102], [1440, 87], [1526, 101], [1450, 124]], "#fff", "#333");
poly([[1358, 102], [1450, 124], [1450, 316], [1369, 252]], "#fff", "#333");
poly([[1450, 124], [1526, 101], [1517, 248], [1450, 316]], "#fff", "#333");

document.getElementById("model-view").innerHTML = `
  <circle cx="42" cy="258" r="55" fill="#2f2c2b"/>
  <path d="M78 255h3" stroke="#f00"/>
  <text x="80" y="267" fill="#0f0">Y</text>
  <g transform="translate(107 15) scale(0.4656 0.3333)">${shapes.join("")}</g>
  <text transform="translate(747 81) skewY(20)" fill="#777">Справа</text>
  <text transform="translate(790 92) skewY(-22)" fill="#777">Сзади</text>`;
```
